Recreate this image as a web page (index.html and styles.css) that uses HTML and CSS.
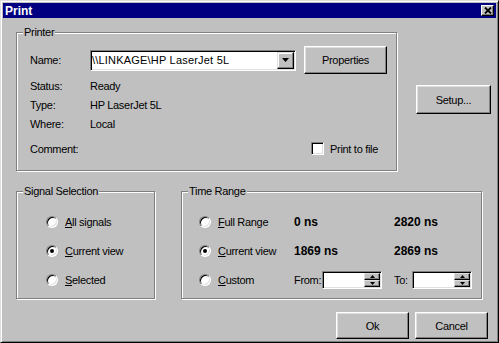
FILE: index.html
```html
<!DOCTYPE html>
<html>
  <head>
    <meta charset="utf-8">
    <link rel="stylesheet" href="styles.css">
  </head>
  <body>
    <div class="window">
      <div class="titlebar">
        <span class="titlebar__text">Print</span>
        <span class="titlebar__close">
          <svg width="8" height="7" viewBox="0 0 8 7"><path d="M1 0.5L7 6.5M7 0.5L1 6.5" stroke="#000" stroke-width="1.8"/></svg>
        </span>
      </div>
      <div class="body">
        <div class="top">
          <div class="group group--printer">
            <span class="group__label">Printer</span>
            <div class="name-row">
              <span class="field-label">Name:</span>
              <div class="combo">
                <span class="combo__text">\\LINKAGE\HP LaserJet 5L</span>
                <span class="combo__btn">
                  <svg width="7" height="4" viewBox="0 0 7 4"><path d="M0 0h7L3.5 4z"/></svg>
                </span>
              </div>
              <div class="btn btn--properties">Properties</div>
            </div>
            <div class="info-row info-row--first"><span class="field-label">Status:</span><span>Ready</span></div>
            <div class="info-row"><span class="field-label">Type:</span><span>HP LaserJet 5L</span></div>
            <div class="info-row"><span class="field-label">Where:</span><span>Local</span></div>
            <div class="info-row info-row--comment">
              <span class="field-label">Comment:</span>
              <span class="check"><span class="check__box"></span>Print to file</span>
            </div>
          </div>
          <div class="btn btn--setup">Setup...</div>
        </div>

        <div class="middle">
          <div class="group group--signal">
            <span class="group__label">Signal Selection</span>
            <div class="radio-opt radio-row"><span class="radio"></span><span><u>A</u>ll signals</span></div>
            <div class="radio-opt radio-row"><span class="radio radio--on"></span><span><u>C</u>urrent view</span></div>
            <div class="radio-opt radio-row"><span class="radio"></span><span><u>S</u>elected</span></div>
          </div>
          <div class="group group--range">
            <span class="group__label">Time Range</span>
            <div class="range-grid">
              <div class="radio-opt"><span class="radio"></span><span><u>F</u>ull Range</span></div>
              <span class="value">0 ns</span>
              <span class="value">2820 ns</span>

              <div class="radio-opt"><span class="radio radio--on"></span><span><u>C</u>urrent view</span></div>
              <span class="value">1869 ns</span>
              <span class="value">2869 ns</span>

              <div class="radio-opt"><span class="radio"></span><span><u>C</u>ustom</span></div>
              <div class="spin-wrap">
                <span class="spin-label spin-label--from">From:</span>
                <div class="spin">
                  <span class="spin__field"></span>
                  <span class="spin__btns">
                    <span class="spin__btn"><svg width="5" height="3" viewBox="0 0 5 3"><path d="M2.5 0L5 3H0z"/></svg></span>
                    <span class="spin__btn"><svg width="5" height="3" viewBox="0 0 5 3"><path d="M0 0h5L2.5 3z"/></svg></span>
                  </span>
                </div>
              </div>
              <div class="spin-wrap">
                <span class="spin-label spin-label--to">To:</span>
                <div class="spin">
                  <span class="spin__field"></span>
                  <span class="spin__btns">
                    <span class="spin__btn"><svg width="5" height="3" viewBox="0 0 5 3"><path d="M2.5 0L5 3H0z"/></svg></span>
                    <span class="spin__btn"><svg width="5" height="3" viewBox="0 0 5 3"><path d="M0 0h5L2.5 3z"/></svg></span>
                  </span>
                </div>
              </div>
            </div>
          </div>
        </div>

        <div class="actions">
          <div class="btn btn--dialog">Ok</div>
          <div class="btn btn--dialog">Cancel</div>
        </div>
      </div>
    </div>
  </body>
</html>
```

FILE: styles.css
```css
body {
  margin: 0;
  background: #c0c0c0;
}

.window {
  width: 499px;
  height: 343px;
  box-sizing: border-box;
  border: 1px solid;
  border-color: #dfdfdf #000 #000 #dfdfdf;
  box-shadow: inset 1px 1px #fff, inset -1px -1px #808080;
  padding: 2px;
  background: #c0c0c0;
  color: #000;
  font: 11px "Liberation Sans", Arial, sans-serif;
  letter-spacing: -0.3px;
  display: flex;
  flex-direction: column;
}

/* title bar */
.titlebar {
  height: 15px;
  flex-shrink: 0;
  background: #000080;
  color: #fff;
  display: flex;
  align-items: center;
  justify-content: space-between;
  padding: 0 2px;
}
.titlebar__text {
  font-weight: bold;
  font-size: 12px;
  letter-spacing: 0;
}
.titlebar__close {
  width: 13px;
  height: 11px;
  box-sizing: border-box;
  background: #c0c0c0;
  border: 1px solid;
  border-color: #fff #000 #000 #fff;
  box-shadow: inset -1px -1px #808080;
  display: flex;
  align-items: center;
  justify-content: center;
}

.body {
  padding: 14px 8px 0 13px;
  display: flex;
  flex-direction: column;
}

/* raised and sunken bits */
.btn {
  box-sizing: border-box;
  background: #c0c0c0;
  border: 1px solid;
  border-color: #fff #000 #000 #fff;
  box-shadow: inset -1px -1px #808080, inset 1px 1px #dfdfdf;
  display: flex;
  align-items: center;
  justify-content: center;
  flex-shrink: 0;
}
.btn--properties {
  width: 83px;
  height: 28px;
  margin-left: 8px;
}
.btn--setup {
  width: 75px;
  height: 29px;
  margin: 53px 0 0 19px;
}
.btn--dialog {
  width: 73px;
  height: 27px;
}

.combo,
.check__box,
.radio,
.spin {
  box-sizing: border-box;
  border: 1px solid;
  border-color: #808080 #fff #fff #808080;
  box-shadow: inset 1px 1px #000, inset -1px -1px #dfdfdf;
  background: #fff;
}

/* group boxes */
.group {
  position: relative;
  box-sizing: border-box;
  border: 1px solid #808080;
  box-shadow: 1px 1px 0 #fff, inset 1px 1px 0 #fff;
  flex-shrink: 0;
}
.group__label {
  position: absolute;
  top: -7px;
  left: 6px;
  padding: 0 1px;
  background: #c0c0c0;
  line-height: 13px;
  white-space: nowrap;
}

.top {
  display: flex;
  align-items: flex-start;
}
.group--printer {
  width: 381px;
  height: 139px;
  padding-left: 13px;
}

.name-row {
  display: flex;
  align-items: center;
  height: 28px;
  margin-top: 13px;
}
.field-label {
  width: 60px;
  flex-shrink: 0;
}
.combo {
  width: 206px;
  height: 21px;
  padding: 1px;
  display: flex;
  flex-shrink: 0;
}
.combo__text {
  flex: 1;
  line-height: 17px;
  letter-spacing: 0.2px;
  white-space: nowrap;
}
.combo__btn {
  width: 17px;
  height: 17px;
  box-sizing: border-box;
  background: #c0c0c0;
  border: 1px solid;
  border-color: #dfdfdf #000 #000 #dfdfdf;
  box-shadow: inset -1px -1px #808080, inset 1px 1px #fff;
  display: flex;
  align-items: center;
  justify-content: center;
}

.info-row {
  display: flex;
  align-items: center;
  height: 19px;
}
.info-row--first {
  margin-top: 2px;
}
.info-row--comment {
  margin-top: 6px;
}
.check {
  display: flex;
  align-items: center;
  margin-left: 221px;
}
.check__box {
  width: 13px;
  height: 13px;
  margin-right: 6px;
}

/* selection groups */
.middle {
  display: flex;
  margin-top: 20px;
}
.group--signal {
  width: 139px;
  height: 108px;
  padding: 15px 0 0 29px;
}
.group--range {
  width: 301px;
  height: 108px;
  margin-left: 26px;
  padding: 15px 0 0 17px;
}
.radio-opt {
  display: flex;
  align-items: center;
  white-space: nowrap;
}
.radio-row {
  height: 29px;
}
.radio {
  width: 12px;
  height: 12px;
  border-radius: 50%;
  margin-right: 7px;
  flex-shrink: 0;
  display: flex;
  align-items: center;
  justify-content: center;
}
.radio--on::after {
  content: "";
  width: 4px;
  height: 4px;
  border-radius: 50%;
  background: #000;
}

.range-grid {
  display: grid;
  grid-template-columns: 95px 100px auto;
  grid-auto-rows: 29px;
  align-items: center;
}
.value {
  font-weight: bold;
  font-size: 12px;
  letter-spacing: 0;
}
.spin-wrap {
  display: flex;
  align-items: center;
}
.spin-label--from {
  width: 28px;
}
.spin-label--to {
  width: 18px;
}
.spin {
  width: 60px;
  height: 18px;
  padding: 1px;
  display: flex;
}
.spin__field {
  flex: 1;
}
.spin__btns {
  width: 16px;
  display: flex;
  flex-direction: column;
}
.spin__btn {
  flex: 1;
  box-sizing: border-box;
  background: #c0c0c0;
  border: 1px solid;
  border-color: #dfdfdf #000 #000 #dfdfdf;
  box-shadow: inset -1px -1px #808080;
  display: flex;
  align-items: center;
  justify-content: center;
}

.actions {
  display: flex;
  justify-content: flex-end;
  gap: 6px;
  margin-top: 13px;
}
```
